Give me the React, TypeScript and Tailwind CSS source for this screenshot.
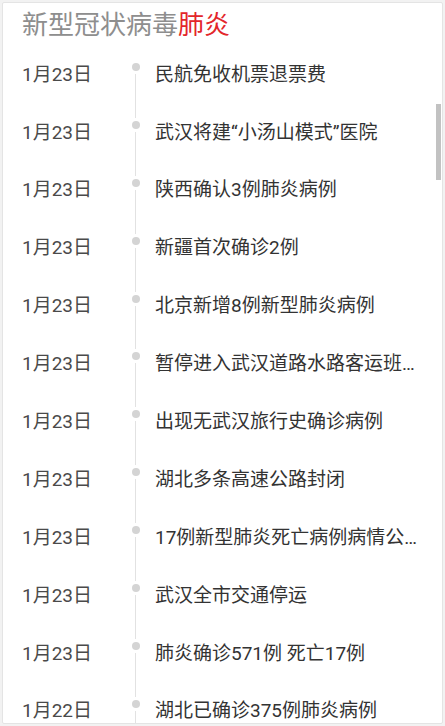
const items = [
  { date: "1月23日", text: "民航免收机票退票费" },
  { date: "1月23日", text: "武汉将建“小汤山模式”医院" },
  { date: "1月23日", text: "陕西确认3例肺炎病例" },
  { date: "1月23日", text: "新疆首次确诊2例" },
  { date: "1月23日", text: "北京新增8例新型肺炎病例" },
  { date: "1月23日", text: "暂停进入武汉道路水路客运班线" },
  { date: "1月23日", text: "出现无武汉旅行史确诊病例" },
  { date: "1月23日", text: "湖北多条高速公路封闭" },
  { date: "1月23日", text: "17例新型肺炎死亡病例病情公布" },
  { date: "1月23日", text: "武汉全市交通停运" },
  { date: "1月23日", text: "肺炎确诊571例 死亡17例" },
  { date: "1月22日", text: "湖北已确诊375例肺炎病例" },
];

const font = { fontFamily: 'Roboto, "Noto Sans CJK SC", sans-serif' };

export default function App() {
  return (
    <div className="h-[726px] w-[445px] bg-[#f2f2f2] p-[2px]" style={font}>
      <div className="relative h-full overflow-hidden rounded-[2px] border border-[#e4e4e4] bg-white">
        <div className="pl-[19px] pt-[5px] text-[26px] leading-[34px] text-[#8e8e8e]">
          新型冠状病毒<span className="text-[#e3262b]">肺炎</span>
        </div>

        <div className="mt-[4px] flex flex-col">
          {items.map((item, i) => (
            <div key={i} className="flex h-[57.9px] shrink-0 items-stretch pl-[19px] pr-[22px]">
              <div className="flex w-[109px] shrink-0 items-center text-[19px] text-[#4a4a4a]">
                {item.date}
              </div>
              <div className="flex w-[9px] shrink-0 flex-col items-center">
                <div className={`h-[14px] w-px ${i === 0 ? "bg-transparent" : "bg-[#e2e2e2]"}`} />
                <div className="mt-[3px] h-[8px] w-[8px] rounded-full bg-[#d4d4d4]" />
                <div className="mt-[3px] w-px flex-1 bg-[#e2e2e2]" />
              </div>
              <div className="ml-[15px] flex min-w-0 flex-1 items-center">
                <p className="truncate text-[19px] text-[#333333]">{item.text}</p>
              </div>
            </div>
          ))}
        </div>

        <div className="absolute right-[1px] top-[101px] h-[76px] w-[5px] bg-[#c2c2c2]" />
      </div>
    </div>
  );
}
